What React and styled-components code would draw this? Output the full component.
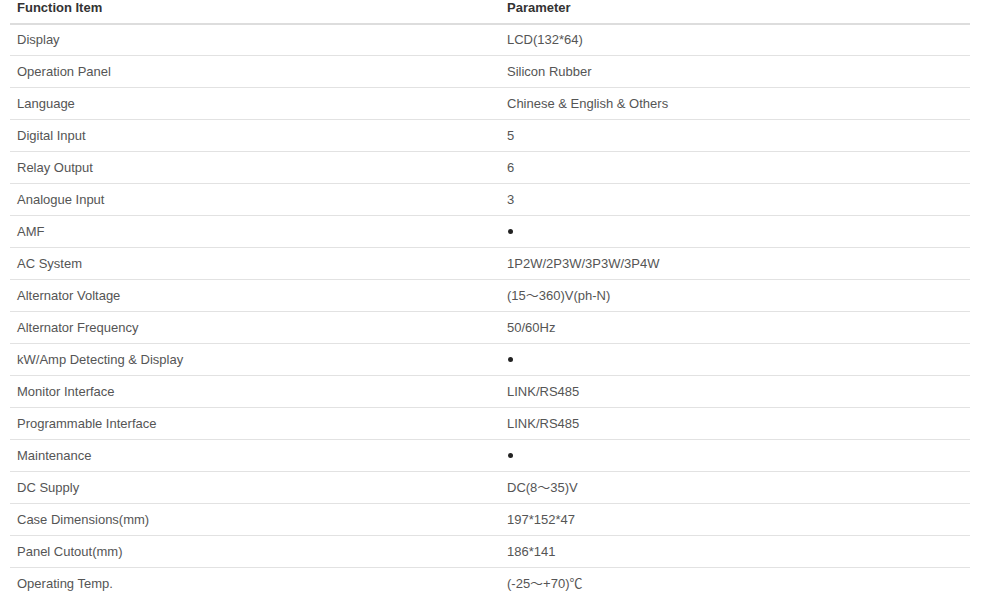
import React from "react";
import styled, { createGlobalStyle } from "styled-components";

const GlobalStyle = createGlobalStyle`
  html, body {
    margin: 0;
    padding: 0;
    background: #ffffff;
  }
  body {
    font-family: "Liberation Sans", Arial, "Noto Sans CJK SC", sans-serif;
    overflow: hidden;
  }
`;

const Page = styled.div`
  padding: 0 30px 0 10px;
`;

const Table = styled.table`
  width: 960px;
  border-collapse: collapse;
  border-spacing: 0;
  table-layout: fixed;
  font-size: 13px;
`;

const HeadCell = styled.th`
  width: ${(p) => p.$width || "auto"};
  text-align: left;
  font-weight: bold;
  color: #333333;
  line-height: 16px;
  height: 16px;
  padding: 0 7px 7px;
  border-bottom: 2px solid #dddddd;
  vertical-align: top;
`;

const Cell = styled.td`
  color: #555555;
  line-height: 19px;
  padding: 6px 7px 6px;
  border-top: 1px solid #e2e2e2;
  vertical-align: top;
  white-space: nowrap;

  tr:first-child > & {
    padding-top: 5px;
  }
`;

const Dot = styled.span`
  display: inline-block;
  width: 5px;
  height: 5px;
  border-radius: 50%;
  background: #222222;
  vertical-align: 2px;
  margin-left: 1px;
`;

const rows = [
  ["Display", "LCD(132*64)"],
  ["Operation Panel", "Silicon Rubber"],
  ["Language", "Chinese & English & Others"],
  ["Digital Input", "5"],
  ["Relay Output", "6"],
  ["Analogue Input", "3"],
  ["AMF", null],
  ["AC System", "1P2W/2P3W/3P3W/3P4W"],
  ["Alternator Voltage", "(15～360)V(ph-N)"],
  ["Alternator Frequency", "50/60Hz"],
  ["kW/Amp Detecting & Display", null],
  ["Monitor Interface", "LINK/RS485"],
  ["Programmable Interface", "LINK/RS485"],
  ["Maintenance", null],
  ["DC Supply", "DC(8～35)V"],
  ["Case Dimensions(mm)", "197*152*47"],
  ["Panel Cutout(mm)", "186*141"],
  ["Operating Temp.", "(-25～+70)℃"],
];

export default function App() {
  return (
    <>
      <GlobalStyle />
      <Page>
        <Table>
          <thead>
            <tr>
              <HeadCell $width="476px">Function Item</HeadCell>
              <HeadCell>Parameter</HeadCell>
            </tr>
          </thead>
          <tbody>
            {rows.map(([item, value]) => (
              <tr key={item}>
                <Cell>{item}</Cell>
                <Cell>{value === null ? <Dot title="•" /> : value}</Cell>
              </tr>
            ))}
          </tbody>
        </Table>
      </Page>
    </>
  );
}
